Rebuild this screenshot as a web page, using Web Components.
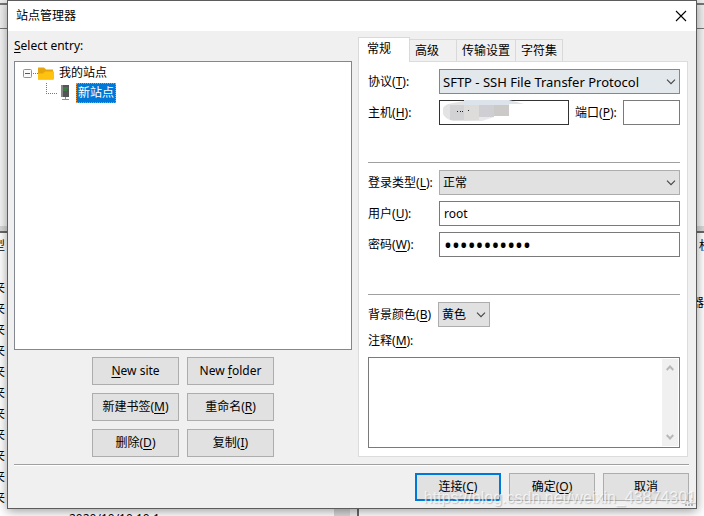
<!DOCTYPE html>
<html lang="zh-CN">
<head>
<meta charset="utf-8">
<title>站点管理器</title>
<style>
html, body { height: 100%; }
body { margin: 0; overflow: hidden; font: 12px/16px "Noto Sans", "Noto Sans CJK SC", sans-serif; color: #000; background: #f0f0f0; }
</style>
</head>
<body>
<app-desktop>
  <file-list slot="back"></file-list>
  <site-dialog heading="站点管理器">
    <site-tree slot="left"></site-tree>
    <site-settings slot="right"></site-settings>
    <push-button slot="actions" primary label="连接" key="C"></push-button>
    <push-button slot="actions" label="确定" key="O"></push-button>
    <push-button slot="actions" label="取消"></push-button>
  </site-dialog>
  <span slot="mark">https://blog.csdn.net/weixin_43874301</span>
</app-desktop>
<script>
const define = (name, html, setup) => customElements.define(name, class extends HTMLElement {
  connectedCallback() {
    if (this.shadowRoot) return;
    const t = document.createElement('template');
    t.innerHTML = typeof html === 'function' ? html(this) : html;
    this.attachShadow({ mode: 'open' }).append(t.content.cloneNode(true));
    if (setup) setup(this);
  }
});

define('push-button', el => {
  const key = el.getAttribute('key');
  const text = el.getAttribute('label') || '';
  const at = key && text.indexOf(key);
  const label = !key ? text : at >= 0
    ? `${text.slice(0, at)}<u>${key}</u>${text.slice(at + 1)}`
    : `${text}(<u>${key}</u>)`;
  return `<style>
    :host { display: block; min-width: 86px; }
    button { display: block; box-sizing: border-box; width: 100%; height: 28px; padding: 0; border: 1px solid #adadad; background: #e1e1e1; font: inherit; color: #000; }
    :host([primary]) button { border: 2px solid #0078d7; }
    u { text-underline-offset: 2px; text-decoration-skip-ink: none; }
  </style><button type="button">${label}</button>`;
});

const chevron = '<svg viewBox="0 0 10 6" width="10" height="6"><path d="M1 .7 5 4.7 9 .7" fill="none" stroke="#444" stroke-width="1.1"/></svg>';

define('field-label', el => `<style>
    :host { display: block; white-space: nowrap; }
    u { text-underline-offset: 2px; text-decoration-skip-ink: none; }
  </style><label><slot></slot>(<u>${el.getAttribute('key')}</u>)${el.hasAttribute('plain') ? '' : ':'}</label>`,
  el => el.addEventListener('click', () => {
    const next = el.nextElementSibling;
    const field = next && (next.shadowRoot || next).querySelector('input, select, textarea');
    if (field) field.focus();
  }));

define('combo-box', el => `<style>
    :host { display: grid; align-items: center; }
    select { grid-area: 1 / 1; appearance: none; box-sizing: border-box; width: 100%; height: 25px; margin: 0; padding: 0 20px 0 3px; border: 1px solid #adadad; border-radius: 0; background: #e1e1e1; font: inherit; color: #000; }
    :host([hot]) select { border-color: #5b92c0; background: #e3e8ed; font-size: 13px; }
    svg { grid-area: 1 / 1; justify-self: end; margin-right: 4px; pointer-events: none; }
  </style><select aria-label="${el.getAttribute('name')}"><option>${el.getAttribute('value')}</option></select>${chevron}`);

define('text-box', el => `<style>
    :host { display: block; position: relative; min-width: 0; }
    input { display: block; box-sizing: border-box; width: 100%; height: 25px; margin: 0; padding: 0 4px; border: 1px solid #7a7a7a; background: #fff; font: inherit; color: #000; outline: 0; }
    input[type=password] { font-size: 21px; }
    :host([dark]) input { border-color: #333; }
    ::slotted(svg) { position: absolute; left: 3px; top: 0; }
  </style><input type="${el.getAttribute('type') || 'text'}" aria-label="${el.getAttribute('name')}" value="${el.getAttribute('value') || ''}"><slot></slot>`);

define('site-tree', `<style>
    :host { display: flex; flex-direction: column; height: 100%; }
    .caption { padding: 7px 0 7px; line-height: 16px; }
    u { text-underline-offset: 2px; }
    ul { list-style: none; margin: 0; padding: 0; }
    .tree { flex: 1; box-sizing: border-box; min-height: 289px; padding: 1px 8px; border: 1px solid #828790; background: #fff; }
    .row { display: flex; align-items: center; height: 20px; }
    .row svg { flex: none; }
    .name { padding: 0 2px; line-height: 20px; }
    .child { padding-left: 22px; }
    .on { background: #0078d7; color: #fff; outline: 1px dotted #e8903a; outline-offset: -1px; }
    .buttons { display: grid; grid-template-columns: repeat(2, 87px); gap: 8px; justify-content: center; padding: 7px 0 0; }
  </style>
  <div class="caption"><u>S</u>elect entry:</div>
  <ul class="tree" role="tree">
    <li role="treeitem"><div class="row">
      <svg width="34" height="20" viewBox="0 0 34 20">
        <rect x=".5" y="6.500" width="8" height="8" rx="1" fill="#fafafa" stroke="#919191"/>
        <path d="M2 10.500h5" stroke="#3b5a9a"/><path d="M10 10.500h5" stroke="#777" stroke-dasharray="1 1"/>
        <path d="M15 4.500h6l2 2h7v10H15z" fill="#e5a50c"/><path d="M15 16.500v-6h5l2-2h9v8z" fill="#ffc20e"/>
      </svg><span class="name">我的站点</span></div>
      <ul role="group"><li class="child" role="treeitem"><div class="row">
        <svg width="31" height="20" viewBox="0 0 31 20">
          <path d="M1.500 0v10.500M1 10.500h12" fill="none" stroke="#777" stroke-dasharray="1 1"/>
          <rect x="16" y="2" width="8" height="12" fill="#555"/><rect x="16" y="2" width="2" height="12" fill="#888"/>
          <path d="M18 5h5M18 7h4" stroke="#23a534"/><path d="M20.500 14v3M17 16.500h7" stroke="#8b9296"/>
        </svg><span class="name on">新站点</span></div></li></ul>
    </li>
  </ul>
  <div class="buttons">
    <push-button label="New site" key="N"></push-button><push-button label="New folder" key="f"></push-button>
    <push-button label="新建书签" key="M"></push-button><push-button label="重命名" key="R"></push-button>
    <push-button label="删除" key="D"></push-button><push-button label="复制" key="I"></push-button>
  </div>`);

define('site-settings', `<style>
    :host { display: flex; flex-direction: column; height: 100%; }
    .tabs { display: flex; align-items: flex-end; padding-top: 6px; }
    .tabs button { height: 22px; margin: 0 0 0 -1px; padding: 0 7px; border: 1px solid #d9d9d9; border-bottom: 0; background: #f0f0f0; font: inherit; color: #000; }
    .tabs button:nth-child(n+3) { padding: 0 5px; }
    .tabs button:nth-child(2) { padding: 0 17px 0 5px; }
    .tabs button[aria-selected=true] { height: 25px; margin: 0 0 -1px; padding: 0 18px 3px 8px; background: #fff; z-index: 1; }
    .panel { flex: 1; box-sizing: border-box; padding: 7px 7px 8px 9px; border: 1px solid #dcdcdc; background: #fff; display: flex; flex-direction: column; }
    .row { display: grid; grid-template-columns: 65px 1fr; column-gap: 6px; align-items: center; margin-bottom: 6px; }
    .split { display: grid; grid-template-columns: 130fr 42px 57fr; column-gap: 6px; align-items: center; }
    hr { width: 100%; box-sizing: border-box; height: 1px; margin: 31px 0 7px; border: 0; background: #a0a0a0; }
    .short { grid-template-columns: 65px 52px; column-gap: 5px; }
    .area { flex: 1; display: flex; box-sizing: border-box; min-height: 91px; margin-top: 8px; border: 1px solid #7a7a7a; padding: 1px; }
    textarea { flex: 1; min-width: 0; resize: none; border: 0; outline: 0; padding: 2px; font: inherit; }
    .bar { width: 16px; background: #f0f0f0; display: flex; flex-direction: column; justify-content: space-between; align-items: center; padding: 6px 0; box-sizing: border-box; }
  </style>
  <div class="tabs" role="tablist">
    <button role="tab" aria-selected="true">常规</button><button role="tab">高级</button><button role="tab">传输设置</button><button role="tab">字符集</button>
  </div>
  <div class="panel">
    <div class="row"><field-label key="T">协议</field-label><combo-box hot name="协议" value="SFTP - SSH File Transfer Protocol"></combo-box></div>
    <div class="row"><field-label key="H">主机</field-label><div class="split">
      <text-box dark name="主机"><svg width="84" height="25" viewBox="0 0 84 25">
        <path d="M1 8Q3 4 11 3l11-2v20H11Q3 19 1 14z" fill="#e3e3e5"/><path d="M8 5h14v15H8z" fill="#d2d2d4"/><path d="M22 3h15v18H22z" fill="#dedcdb"/>
        <path d="M22 0h45l15 4H67v1H22z" fill="#dde3ea"/><path d="M37 5h15v12H37z" fill="#cfcfd3"/><path d="M52 5h15v11H52z" fill="#cbcac9"/><path d="M14 21l23-1V17h15l-12 4H14z" fill="#e8e7ea"/>
        <path d="M15 11.500h1M18 11.500h1M20 11.500h1M26 10.500h1" stroke="#222"/>
      </svg></text-box>
      <field-label key="P">端口</field-label><text-box name="端口"></text-box></div></div>
    <hr>
    <div class="row"><field-label key="L">登录类型</field-label><combo-box name="登录类型" value="正常"></combo-box></div>
    <div class="row"><field-label key="U">用户</field-label><text-box name="用户" value="root"></text-box></div>
    <div class="row"><field-label key="W">密码</field-label><text-box type="password" name="密码" value="abcdefghijk"></text-box></div>
    <hr>
    <div class="row short"><field-label plain key="B">背景颜色</field-label><combo-box name="背景颜色" value="黄色"></combo-box></div>
    <field-label key="M">注释</field-label>
    <div class="area"><textarea aria-label="注释"></textarea><div class="bar">
      <svg width="8" height="6" viewBox="0 0 8 6"><path d="M.7 5 4 1.500 7.300 5" fill="none" stroke="#b8b8b8" stroke-width="2"/></svg>
      <svg width="8" height="6" viewBox="0 0 8 6"><path d="M.7 1 4 4.500 7.300 1" fill="none" stroke="#b8b8b8" stroke-width="2"/></svg>
    </div></div>
  </div>`);

define('site-dialog', el => `<style>
    :host { display: flex; flex-direction: column; border: 1px solid #5c5c5c; background: #f0f0f0; box-shadow: 0 2px 10px rgba(0,0,0,.4); }
    header { display: flex; align-items: center; justify-content: space-between; height: 30px; padding: 0 9px 0 8px; background: #fff; }
    h1 { margin: 0; font: inherit; }
    header button { display: flex; padding: 0; border: 0; background: none; }
    main { flex: 1; display: grid; grid-template-columns: 338fr 330fr; column-gap: 6px; padding: 0 8px 7px 6px; }
    footer { position: relative; display: flex; justify-content: flex-end; gap: 8px; margin: 0 7px 0 6px; padding: 8px 0 7px; border-top: 1px solid #a0a0a0; box-shadow: inset 0 1px #fff; }
    .grip { position: absolute; right: -5px; bottom: 1px; }
  </style>
  <header><h1>${el.getAttribute('heading')}</h1><button aria-label="关闭"><svg width="12" height="12" viewBox="0 0 12 12"><path d="m1 1 10 10M11 1 1 11" stroke="#000" stroke-width="1.1"/></svg></button></header>
  <main><slot name="left"></slot><slot name="right"></slot></main>
  <footer><slot name="actions"></slot><svg class="grip" width="9" height="9" viewBox="0 0 9 9"><path d="M6 0h2v2H6zM3 3h2v2H3zM6 3h2v2H6zM0 6h2v2H0zM3 6h2v2H3zM6 6h2v2H6z" fill="#b5b5b5"/></svg></footer>`);

define('file-list', `<style>
    :host { display: grid; grid-template-columns: 350fr 7px 347fr; grid-template-rows: 5px 24px 1fr 285px; height: 100%; background: #f0f0f0; }
    .top { grid-column: 1 / -1; border-bottom: 2px solid #777; box-sizing: border-box; background: #eee; }
    .tools { grid-column: 1 / -1; border-bottom: 1px solid #777; box-sizing: border-box; }
    .log { grid-column: 1 / -1; border-bottom: 5px solid #d8d8d8; background: #f5f5f5; }
    .pane { border-top: 2px solid #696969; background: #fff; overflow: hidden; padding-top: 2px; white-space: nowrap; }
    .pane p { margin: 0; height: 21px; line-height: 21px; }
    .left { display: grid; grid-template-columns: 5px 1fr; align-content: start; column-gap: 64px; grid-auto-rows: 21px; border-right: 16px solid #d8d8d8; }
    .left p { direction: rtl; }
    .left p:nth-child(odd) { width: 5px; }
    .left .kind { width: 12px; }
    .left .date { direction: ltr; }
    .right { border-left: 2px solid #696969; display: flex; flex-direction: column; align-items: flex-end; }
    .right p:first-child { width: 5px; overflow: hidden; }
    .right .own { margin-top: 36px; width: 9px; direction: rtl; }
  </style>
  <div class="top"></div><div class="tools"></div><div class="log"></div>
  <div class="pane left"><p class="kind">类型</p><p></p><p></p><p></p>${'<p>夹</p><p></p>'.repeat(10)}<p>夹</p><p></p><p></p><p class="date">2020/10/10 10:1</p></div>
  <div></div>
  <div class="pane right"><p>权限</p><p class="own">器</p></div>`);

define('app-desktop', `<style>
    :host { display: grid; min-height: 100%; overflow: hidden; }
    .back, .front { grid-area: 1 / 1; min-width: 0; }
    .front { display: grid; padding: 0 7px; padding-bottom: 7px; z-index: 1; }
    ::slotted([slot=mark]) { position: absolute; z-index: 2; right: 8px; bottom: 8px; font: 16px/20px "Liberation Sans", Arial, sans-serif; color: rgba(255,255,255,.7); text-shadow: 1px 1px 1px rgba(120,120,120,.4); pointer-events: none; }
  </style>
  <div class="back"><slot name="back"></slot></div><div class="front"><slot></slot></div><slot name="mark"></slot>`);
</script>
</body>
</html>
